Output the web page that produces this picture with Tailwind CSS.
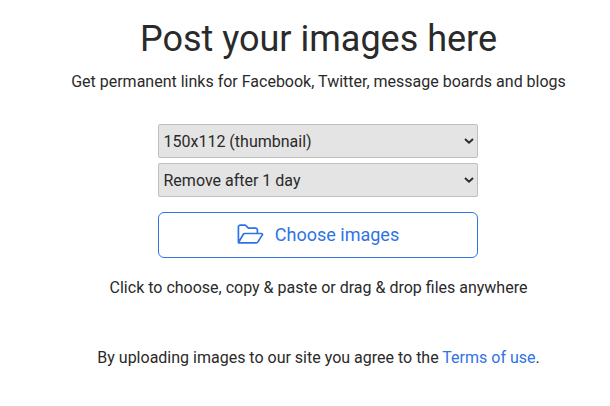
<!DOCTYPE html>
<html lang="en">
<head>
    <meta charset="UTF-8">
    <meta name="viewport" content="width=device-width, initial-scale=1.0">
    <title>Post your images here</title>
    <script src="https://cdn.jsdelivr.net/npm/@tailwindcss/browser@4"></script>
</head>
<body class="bg-white font-['Roboto',sans-serif] text-[#2a2a2a] overflow-hidden">
    <main class="ml-[27px] w-[583px] flex flex-col items-center pt-[15px] text-base leading-6 whitespace-nowrap">
        <h1 class="text-4xl leading-[48px]">Post your images here</h1>
        <p class="mt-[7px]">Get permanent links for Facebook, Twitter, message boards and blogs</p>

        <form class="mt-[30px] -ml-px w-80 flex flex-col">
            <div class="relative h-[34px]">
                <select class="appearance-none w-full h-full pt-[2px] pl-[4.5px] bg-[#e4e4e4] border border-[#bfbfbf] rounded-[2px]">
                    <option>150x112 (thumbnail)</option>
                </select>
                <svg class="absolute right-1 top-[12px] w-[10px] h-[10px]" viewBox="0 0 10 10" fill="none" stroke="#2a2a2a" stroke-width="1.9"><path d="M1 3l4 3.8 4-3.8"/></svg>
            </div>
            <div class="relative h-[34px] mt-[5px]">
                <select class="appearance-none w-full h-full pt-[2px] pl-[4.5px] bg-[#e4e4e4] border border-[#bfbfbf] rounded-[2px]">
                    <option>Remove after 1 day</option>
                </select>
                <svg class="absolute right-1 top-[12px] w-[10px] h-[10px]" viewBox="0 0 10 10" fill="none" stroke="#2a2a2a" stroke-width="1.9"><path d="M1 3l4 3.8 4-3.8"/></svg>
            </div>
            <button type="button" class="mt-[15px] h-[46px] flex items-center justify-center gap-[11px] border border-[#2f73e6] rounded-[6px] text-[#2f73e6] text-lg">
                <svg class="w-[27px] h-[22px]" viewBox="0.3 0.3 27 22" fill="none" stroke="currentColor" stroke-width="1.7" stroke-linejoin="round" stroke-linecap="round"><path d="M1.7 18.6V3.3a1.8 1.8 0 0 1 1.8-1.8h4.7a1.8 1.8 0 0 1 1.3.6l1.7 1.8a1.8 1.8 0 0 0 1.3.6h6.4a1.8 1.8 0 0 1 1.8 1.8v3.5M1.8 18.8l4.7-8a2 2 0 0 1 1.7-1h16.6a.9.9 0 0 1 .8 1.4l-4.4 7a2 2 0 0 1-1.7 1H2.2a.4.4 0 0 1-.4-.4z"/></svg>
                <span>Choose images</span>
            </button>
        </form>

        <p class="mt-[18px]">Click to choose, copy &amp; paste or drag &amp; drop files anywhere</p>
        <p class="mt-[46px]">By uploading images to our site you agree to the <a href="#" class="text-[#2f73e6]">Terms of use</a>.</p>
    </main>
</body>
</html>
